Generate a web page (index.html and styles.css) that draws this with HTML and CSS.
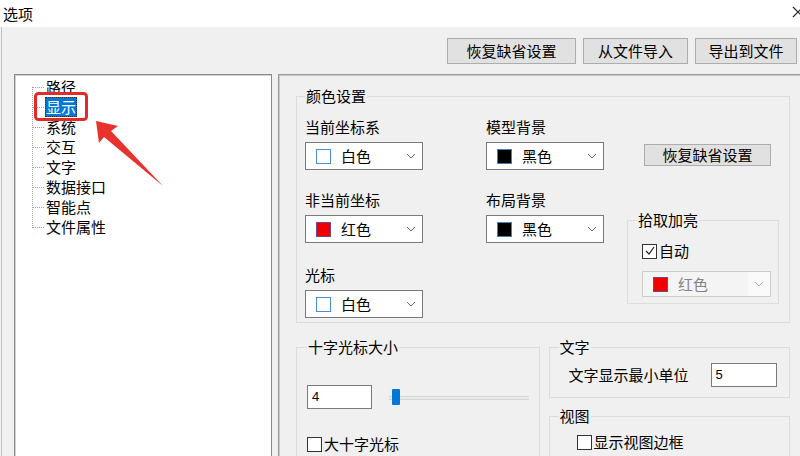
FILE: index.html
```html
<!DOCTYPE html>
<html lang="zh-CN">
<head>
    <meta charset="UTF-8">
    <meta name="viewport" content="width=device-width, initial-scale=1.0">
    <title>选项</title>
    <link rel="stylesheet" href="styles.css">
</head>
<body>
    <div class="titlebar">
        <span class="title">选项</span>
        <svg class="close" width="12" height="12" viewBox="0 0 12 12">
            <path d="M1 1 L11 11 M11 1 L1 11" stroke="#222" stroke-width="1.1" fill="none"/>
        </svg>
    </div>

    <div class="window">
        <div class="toolbar">
            <button class="btn btn-reset">恢复缺省设置</button>
            <button class="btn btn-import">从文件导入</button>
            <button class="btn btn-export">导出到文件</button>
        </div>

        <div class="main">
            <div class="tree">
                <ul>
                    <li class="first"><span class="branch"></span><span class="node">路径</span></li>
                    <li><span class="branch"></span><span class="node selected">显示</span></li>
                    <li><span class="branch"></span><span class="node">系统</span></li>
                    <li><span class="branch"></span><span class="node">交互</span></li>
                    <li><span class="branch"></span><span class="node">文字</span></li>
                    <li><span class="branch"></span><span class="node">数据接口</span></li>
                    <li><span class="branch"></span><span class="node">智能点</span></li>
                    <li class="last"><span class="branch"></span><span class="node">文件属性</span></li>
                </ul>
            </div>

            <div class="panel">
                <fieldset class="group colors">
                    <legend>颜色设置</legend>
                    <div class="color-grid">
                        <div class="col col-a">
                            <div class="field">
                                <div class="label">当前坐标系</div>
                                <div class="combo"><span class="swatch white"></span><span class="combo-text">白色</span><svg class="chevron" width="10" height="6" viewBox="0 0 10 6"><path d="M1 1 L5 5 L9 1" stroke="#666" fill="none"/></svg></div>
                            </div>
                            <div class="field">
                                <div class="label">非当前坐标</div>
                                <div class="combo"><span class="swatch red"></span><span class="combo-text">红色</span><svg class="chevron" width="10" height="6" viewBox="0 0 10 6"><path d="M1 1 L5 5 L9 1" stroke="#666" fill="none"/></svg></div>
                            </div>
                            <div class="field">
                                <div class="label">光标</div>
                                <div class="combo"><span class="swatch white"></span><span class="combo-text">白色</span><svg class="chevron" width="10" height="6" viewBox="0 0 10 6"><path d="M1 1 L5 5 L9 1" stroke="#666" fill="none"/></svg></div>
                            </div>
                        </div>
                        <div class="col col-b">
                            <div class="field">
                                <div class="label">模型背景</div>
                                <div class="combo"><span class="swatch black"></span><span class="combo-text">黑色</span><svg class="chevron" width="10" height="6" viewBox="0 0 10 6"><path d="M1 1 L5 5 L9 1" stroke="#666" fill="none"/></svg></div>
                            </div>
                            <div class="field">
                                <div class="label">布局背景</div>
                                <div class="combo"><span class="swatch black"></span><span class="combo-text">黑色</span><svg class="chevron" width="10" height="6" viewBox="0 0 10 6"><path d="M1 1 L5 5 L9 1" stroke="#666" fill="none"/></svg></div>
                            </div>
                        </div>
                        <div class="col col-c">
                            <button class="btn btn-small">恢复缺省设置</button>
                            <fieldset class="group pick">
                                <legend>拾取加亮</legend>
                                <div class="check-row">
                                    <span class="checkbox checked"><svg width="12" height="12" viewBox="0 0 12 12"><path d="M2 6 L5 9 L10 2" stroke="#222" stroke-width="1.2" fill="none"/></svg></span>自动
                                </div>
                                <div class="combo disabled"><span class="swatch red"></span><span class="combo-text">红色</span><span class="arrow-box"><svg class="chevron" width="10" height="6" viewBox="0 0 10 6"><path d="M1 1 L5 5 L9 1" stroke="#aaa" fill="none"/></svg></span></div>
                            </fieldset>
                        </div>
                    </div>
                </fieldset>

                <div class="lower">
                    <fieldset class="group cross">
                        <legend>十字光标大小</legend>
                        <div class="size-row">
                            <div class="textbox">4</div>
                            <div class="slider"><span class="thumb"></span></div>
                        </div>
                        <div class="check-row">
                            <span class="checkbox"></span>大十字光标
                        </div>
                    </fieldset>

                    <div class="right-stack">
                        <fieldset class="group text">
                            <legend>文字</legend>
                            <div class="unit-row">
                                <span>文字显示最小单位</span>
                                <div class="textbox small">5</div>
                            </div>
                        </fieldset>
                        <fieldset class="group view">
                            <legend>视图</legend>
                            <div class="check-row">
                                <span class="checkbox"></span>显示视图边框
                            </div>
                        </fieldset>
                    </div>
                </div>
            </div>
        </div>
    </div>

    <svg class="annotation" width="170" height="190" viewBox="0 0 170 190">
        <rect x="35.5" y="93.5" width="51" height="26" rx="3" fill="none" stroke="#e42a26" stroke-width="3"/>
        <polygon points="96,121 118,126 111,131 163,186 104,137 99,143" fill="#e8322b"/>
    </svg>
</body>
</html>
```

FILE: styles.css
```css
body {
    margin: 0;
    width: 800px;
    height: 456px;
    overflow: hidden;
    font-family: "Noto Sans CJK SC", "Microsoft YaHei", sans-serif;
    font-size: 15px;
    color: #000;
    background-color: #f0f0f0;
}
.titlebar {
    height: 27px;
    background: #fff;
    display: flex;
    align-items: center;
    justify-content: space-between;
    line-height: 27px;
}
.title {
    padding-left: 3px;
}
.close {
    margin-right: -4px;
    margin-top: -3px;
}
.window {
    margin-left: 1px;
    border-left: 1px solid #c4c4c4;
    height: 429px;
    overflow: hidden;
}
.toolbar {
    height: 47px;
    box-sizing: border-box;
    padding: 11px 3px 0 0;
    display: flex;
    justify-content: flex-end;
    gap: 7px;
}
.btn {
    height: 26px;
    padding: 0;
    background-color: #e1e1e1;
    border: 1px solid #adadad;
    font-family: inherit;
    font-size: 15px;
    line-height: 22px;
    color: #000;
}
.btn-reset {
    width: 129px;
}
.btn-import {
    width: 105px;
}
.btn-export {
    width: 102px;
}
.main {
    display: flex;
    gap: 6px;
    padding-left: 12px;
    height: 382px;
    overflow: hidden;
}
.tree {
    flex: none;
    width: 258px;
    height: 382px;
    box-sizing: border-box;
    background: #fff;
    border: 1px solid #8a8a8a;
    border-bottom: none;
    box-shadow: inset 1px 1px 0 #d0d0d0;
}
.tree ul {
    list-style: none;
    margin: 0;
    padding: 2px 0 0 17px;
}
.tree li {
    display: flex;
    height: 20px;
    line-height: 20px;
}
.branch {
    width: 13px;
    flex: none;
    background-image:
        repeating-linear-gradient(to right, #a0a0a0 0 1px, transparent 1px 2px),
        repeating-linear-gradient(to bottom, #a0a0a0 0 1px, transparent 1px 2px);
    background-size: 12px 1px, 1px 100%;
    background-position: 1px 10px, 0 0;
    background-repeat: no-repeat;
}
.tree li.first .branch {
    background-size: 12px 1px, 1px 10px;
    background-position: 1px 10px, 0 10px;
}
.tree li.last .branch {
    background-size: 12px 1px, 1px 11px;
    background-position: 1px 10px, 0 0;
}
.node {
    padding: 0 1px;
}
.node.selected {
    background-color: #0078d7;
    color: #fff;
    outline: 1px dotted #333;
    outline-offset: -1px;
}
.panel {
    flex: none;
    width: 530px;
    height: 382px;
    box-sizing: border-box;
    border: 1px solid #9a9a9a;
    border-bottom: none;
    box-shadow: inset 1px 1px 0 #c8c8c8;
    padding: 12px 17px 0 17px;
    overflow: hidden;
}
.group {
    margin: 0;
    border: 1px solid #dcdcdc;
    padding: 0 8px 4px 8px;
    min-width: 0;
}
.group legend {
    padding: 0 1px;
    line-height: 18px;
}
.color-grid {
    display: flex;
    margin-top: 13px;
}
.col-a {
    width: 118px;
    margin-right: 63px;
}
.col-b {
    width: 118px;
    margin-right: 23px;
}
.col-c {
    width: 152px;
}
.field + .field {
    margin-top: 21px;
}
.col-a .field:last-child {
    margin-top: 23px;
}
.label {
    line-height: 18px;
    margin-bottom: 6px;
}
.combo {
    height: 28px;
    box-sizing: border-box;
    display: flex;
    align-items: center;
    background: #fff;
    border: 1px solid #7a7a7a;
    padding-left: 10px;
}
.swatch {
    width: 15px;
    height: 15px;
    box-sizing: border-box;
    margin-right: 10px;
    flex: none;
}
.swatch.white {
    background: #fff;
    border: 1px solid #4a8fd6;
}
.swatch.black {
    background: #000;
    border: 1px solid #3f7fc8;
}
.swatch.red {
    background: #f00000;
    border: 1px solid #6a4a8a;
}
.combo-text {
    line-height: 18px;
}
.chevron {
    margin-left: auto;
    margin-right: 6px;
}
.btn-small {
    display: block;
    width: 127px;
    height: 22px;
    line-height: 18px;
    margin: 26px 0 0 17px;
}
.pick {
    margin-top: 45px;
    padding: 0 7px 6px 14px;
}
.pick legend {
    margin-left: -5px;
}
.check-row {
    display: flex;
    align-items: center;
    line-height: 18px;
}
.pick .check-row {
    margin-top: 13px;
}
.checkbox {
    width: 15px;
    height: 15px;
    box-sizing: border-box;
    border: 1px solid #333;
    background: #fff;
    margin-right: 2px;
    display: flex;
    align-items: center;
    justify-content: center;
}
.combo.disabled {
    margin-top: 11px;
    width: 129px;
    height: 26px;
    border-color: #cccccc;
    background: #f4f4f4;
    color: #838383;
    padding-right: 0;
}
.arrow-box {
    margin-left: auto;
    align-self: stretch;
    width: 22px;
    background: #fafafa;
    display: flex;
    align-items: center;
}
.arrow-box .chevron {
    margin: 0 auto;
}
.lower {
    display: flex;
    gap: 9px;
    margin-top: 15px;
}
.cross {
    width: 244px;
    box-sizing: border-box;
    padding: 0 10px 20px 10px;
}
.size-row {
    display: flex;
    align-items: center;
    margin-top: 29px;
}
.textbox {
    width: 65px;
    height: 24px;
    box-sizing: border-box;
    border: 1px solid #7a7a7a;
    background: #fff;
    font-family: "Liberation Sans", Arial, sans-serif;
    font-size: 13px;
    line-height: 22px;
    padding-left: 4px;
}
.slider {
    width: 140px;
    height: 16px;
    margin-left: 17px;
    display: flex;
    align-items: center;
    background: linear-gradient(to bottom, transparent 7px, #d6d6d6 7px, #d6d6d6 8px, #e7eaea 8px, #e7eaea 10px, #d6d6d6 10px, #d6d6d6 11px, transparent 11px);
}
.thumb {
    width: 8px;
    height: 16px;
    margin-left: 3px;
    background: #0078d7;
    border-radius: 1px;
}
.cross .check-row {
    margin-top: 26px;
}
.right-stack {
    width: 242px;
}
.text,
.view {
    padding: 0 8px 10px 9px;
}
.unit-row {
    display: flex;
    align-items: center;
    margin-top: 7px;
    padding-left: 10px;
    line-height: 18px;
}
.textbox.small {
    width: 66px;
    margin-left: 22px;
}
.view {
    margin-top: 9px;
    height: 60px;
}
.view .check-row {
    margin-top: 8px;
    padding-left: 18px;
}
.annotation {
    position: absolute;
    left: 0;
    top: 0;
    pointer-events: none;
}
```
